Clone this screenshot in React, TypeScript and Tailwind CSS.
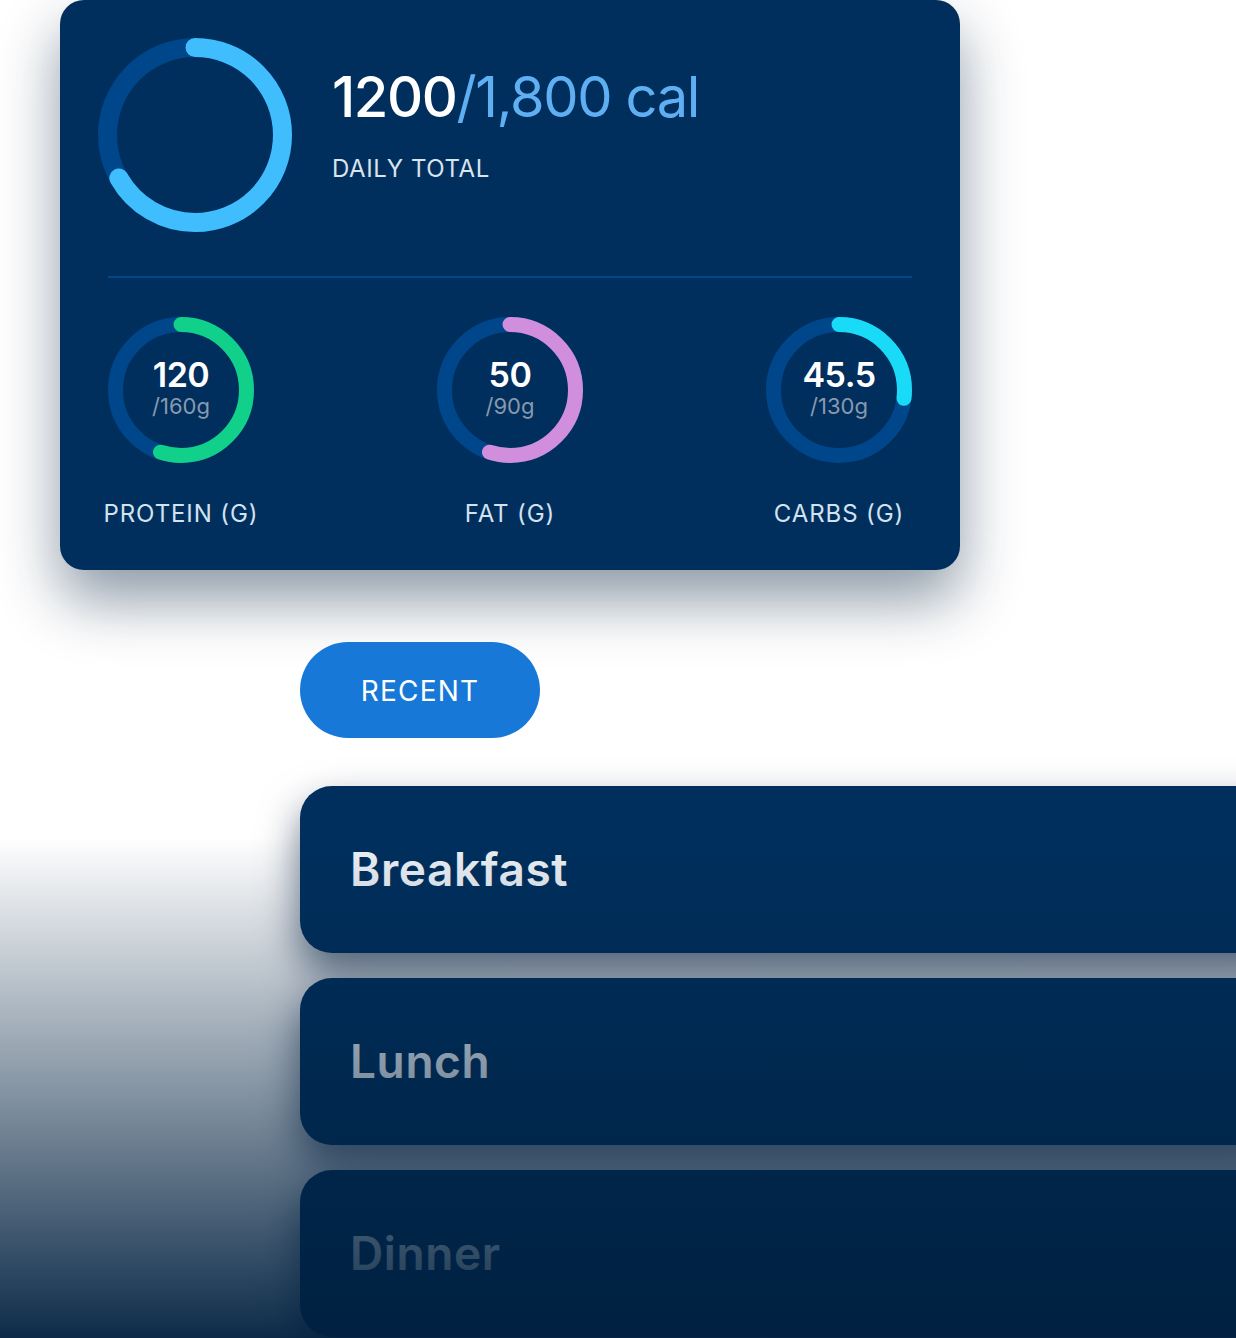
import React from 'react'

interface Macro {
  label: string
  value: string
  goal: string
  fraction: number
  color: string
}

const macros: Macro[] = [
  { label: 'PROTEIN (G)', value: '120', goal: '/160g', fraction: 0.55, color: '#10d08a' },
  { label: 'FAT (G)', value: '50', goal: '/90g', fraction: 0.55, color: '#d08edd' },
  { label: 'CARBS (G)', value: '45.5', goal: '/130g', fraction: 0.27, color: '#19dbf7' },
]

const meals = ['Breakfast', 'Lunch', 'Dinner']

const Ring: React.FC<{ size: number; stroke: number; fraction: number; color: string }> = ({
  size,
  stroke,
  fraction,
  color,
}) => {
  const r = (size - stroke) / 2
  const c = 2 * Math.PI * r
  return (
    <svg width={size} height={size} viewBox={`0 0 ${size} ${size}`} className="-rotate-90">
      <circle cx={size / 2} cy={size / 2} r={r} fill="none" stroke="#00468a" strokeWidth={stroke} />
      <circle
        cx={size / 2}
        cy={size / 2}
        r={r}
        fill="none"
        stroke={color}
        strokeWidth={stroke}
        strokeLinecap="round"
        strokeDasharray={`${fraction * c} ${c}`}
      />
    </svg>
  )
}

const App: React.FC = () => {
  return (
    <div className="relative w-[1236px] h-[1338px] overflow-hidden bg-white font-['Inter',sans-serif]">
      {/* Daily summary card */}
      <div className="ml-[60px] w-[900px] h-[570px] rounded-[24px] bg-[#002f5d] shadow-[0_30px_60px_rgba(0,30,60,0.45)]">
        <div className="flex pt-[38px] pl-[38px]">
          <Ring size={194} stroke={19} fraction={0.667} color="#3fbdfd" />
          <div className="ml-[40px] pt-[27px]">
            <h1 className="text-[56px] leading-[64px] tracking-[-1.4px]">
              <span className="text-white font-medium">1200</span>
              <span className="text-[#5eb0f2]">/1,800 cal</span>
            </h1>
            <p className="mt-[25px] text-[24px] leading-[30px] tracking-[0.6px] text-[#d9e4ef]">DAILY TOTAL</p>
          </div>
        </div>

        <div className="mx-[48px] mt-[44px] h-[2px] bg-[#00478c]" />

        <div className="mx-[48px] mt-[39px] flex justify-between">
          {macros.map((m) => (
            <div key={m.label} className="w-[146px] flex flex-col items-center">
              <div className="relative w-[146px] h-[146px]">
                <Ring size={146} stroke={15} fraction={m.fraction} color={m.color} />
                <div className="absolute inset-0 flex flex-col items-center justify-center pb-[4px]">
                  <span className="text-[34px] leading-[36px] font-semibold text-white tracking-[-0.5px]">
                    {m.value}
                  </span>
                  <span className="text-[22px] leading-[26px] text-[#8899ae]">{m.goal}</span>
                </div>
              </div>
              <span className="mt-[36px] whitespace-nowrap text-[24px] leading-[30px] tracking-[0.9px] text-[#d3e2f0]">
                {m.label}
              </span>
            </div>
          ))}
        </div>
      </div>

      {/* Recent meals */}
      <div className="ml-[300px] mt-[72px]">
        <button className="w-[240px] h-[96px] rounded-full bg-[#1778d7] text-white text-[28px] tracking-[1.2px] pt-[2px]">
          RECENT
        </button>

        <div className="mt-[48px] flex flex-col gap-[25px]">
          {meals.map((meal) => (
            <div
              key={meal}
              className="w-[1000px] h-[167px] rounded-[32px] bg-[#002f5d] shadow-[0_20px_40px_rgba(0,25,55,0.6)] flex items-center pl-[50px]"
            >
              <span className="text-[46px] font-semibold tracking-[0.6px] text-[#eef2f6]">{meal}</span>
            </div>
          ))}
        </div>
      </div>

      {/* Fade overlay */}
      <div className="pointer-events-none absolute inset-x-0 top-[837px] bottom-0 bg-linear-to-b from-[rgba(0,32,63,0)] to-[rgba(0,32,63,0.95)]" />
    </div>
  )
}

export default App
